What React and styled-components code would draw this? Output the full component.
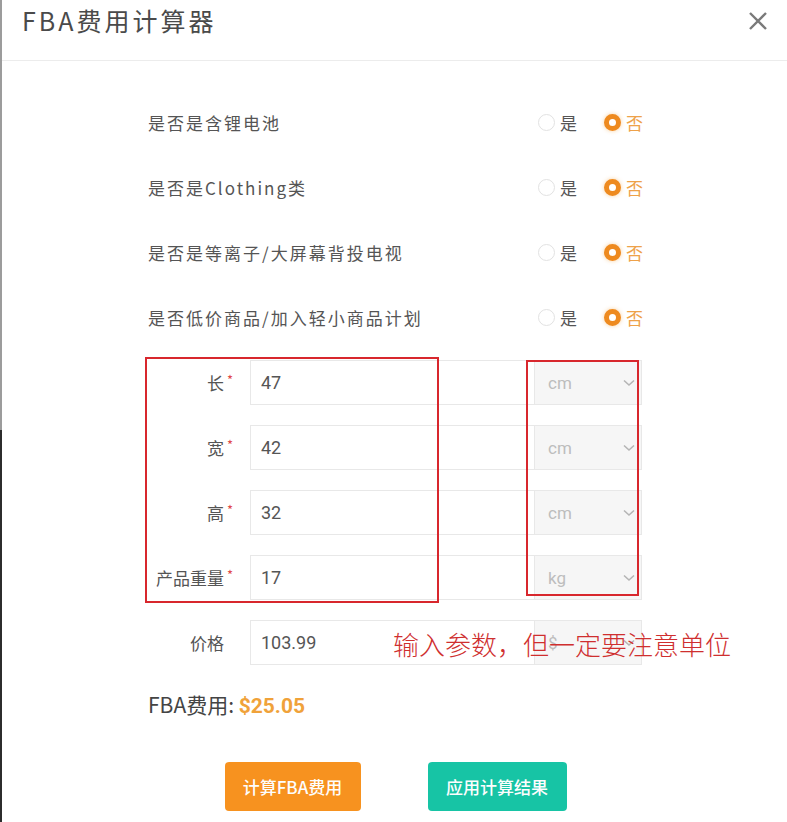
import React from "react";
import styled, { createGlobalStyle } from "styled-components";

const GlobalStyle = createGlobalStyle`
  body {
    margin: 0;
    background: #fff;
    font-family: "Noto Sans CJK SC", "Noto Sans", sans-serif;
  }
`;

const Frame = styled.div`
  width: 785px;
  height: 822px;
  overflow: hidden;
  background: #fff;
  border-left: 2px solid;
  border-image: linear-gradient(to bottom, #9c9c9c 0, #9c9c9c 430px, #2c2c2c 430px) 1;
`;

const Header = styled.div`
  height: 61px;
  display: flex;
  align-items: flex-start;
  justify-content: space-between;
  padding: 3px 18px 0 20px;
  box-sizing: border-box;
  border-bottom: 1px solid #ececec;
`;

const Title = styled.h3`
  margin: 0;
  font-size: 25px;
  line-height: 34px;
  font-weight: 400;
  letter-spacing: 3px;
  color: #4a4a4a;
`;

const Close = styled.button`
  border: 0;
  background: none;
  padding: 0;
  margin-top: 7px;
  width: 22px;
  height: 22px;
  cursor: pointer;
`;

const Body = styled.div`
  padding: 29px 0 0 146px;
  width: 495px;
`;

const Row = styled.div`
  height: 65px;
  display: flex;
  align-items: center;
`;

const Question = styled.span`
  flex: 1;
  font-size: 17px;
  letter-spacing: 2px;
  color: #555;
`;

const Options = styled.div`
  display: flex;
  align-items: center;
  gap: 27px;
`;

const Option = styled.label`
  display: flex;
  align-items: center;
  gap: 5px;
  font-size: 17px;
  color: ${p => (p.checked ? "#eea24a" : "#555")};
`;

const Dot = styled.span`
  width: 17px;
  height: 17px;
  border-radius: 50%;
  box-sizing: border-box;
  border: ${p => (p.checked ? "5.5px solid #ee8a1f" : "1px solid #e2e2e2")};
  background: #fff;
  box-shadow: ${p => (p.checked ? "0 0 4px rgba(240, 150, 40, 0.45)" : "none")};
`;

const Fields = styled.div`
  position: relative;
`;

const Label = styled.span`
  position: relative;
  width: 92px;
  padding-right: 16px;
  box-sizing: border-box;
  text-align: right;
  font-size: 17px;
  color: #555;
`;

const Star = styled.i`
  position: absolute;
  right: 7px;
  top: 0;
  font-style: normal;
  font-size: 13px;
  color: #e04848;
`;

const Input = styled.input`
  width: 285px;
  height: 45px;
  margin-left: 10px;
  box-sizing: border-box;
  border: 1px solid #e8e8e8;
  padding: 0 10px;
  font-family: Roboto, "Liberation Sans", sans-serif;
  font-size: 18px;
  color: #555;
  outline: none;
`;

const Unit = styled.div`
  width: 107px;
  height: 45px;
  box-sizing: border-box;
  border: 1px solid #e8e8e8;
  border-left: 0;
  background: #f6f6f6;
  display: flex;
  align-items: center;
  justify-content: space-between;
  padding: 0 6px 0 13px;
  font-family: Roboto, "Liberation Sans", sans-serif;
  font-size: 17px;
  color: #bdbdbd;
`;

const MarkBox = styled.div`
  position: absolute;
  left: ${p => p.left}px;
  top: ${p => p.top}px;
  width: ${p => p.width}px;
  height: ${p => p.height}px;
  border: 2px solid #d8272d;
  box-sizing: border-box;
  pointer-events: none;
`;

const Note = styled.div`
  position: absolute;
  left: 245px;
  top: 277px;
  font-size: 26px;
  line-height: 34px;
  font-weight: 300;
  color: #cf2f2f;
  white-space: nowrap;
`;

const Fee = styled.div`
  margin-top: 14px;
  font-size: 21px;
  line-height: 30px;
  color: #444;
  & > b {
    font-family: Roboto, "Liberation Sans", sans-serif;
    color: #f0a23a;
  }
`;

const Actions = styled.div`
  display: flex;
  justify-content: center;
  gap: 67px;
  margin-top: 41px;
`;

const Button = styled.button`
  width: ${p => p.width}px;
  height: 49px;
  border: 0;
  border-radius: 4px;
  background: ${p => p.bg};
  color: #fdfdfd;
  font-family: "Noto Sans CJK SC", sans-serif;
  font-size: 17px;
  font-weight: 500;
  cursor: pointer;
`;

const questions = [
  "是否是含锂电池",
  "是否是Clothing类",
  "是否是等离子/大屏幕背投电视",
  "是否低价商品/加入轻小商品计划",
];

const fields = [
  { label: "长", value: "47", unit: "cm", required: true },
  { label: "宽", value: "42", unit: "cm", required: true },
  { label: "高", value: "32", unit: "cm", required: true },
  { label: "产品重量", value: "17", unit: "kg", required: true },
  { label: "价格", value: "103.99", unit: "$" },
];

const Chevron = () => (
  <svg width="12" height="8" viewBox="0 0 12 8">
    <path d="M1 1.5l5 4.5 5-4.5" fill="none" stroke="#b5b5b5" strokeWidth="1.6" />
  </svg>
);

export default function App() {
  return (
    <Frame>
      <GlobalStyle />
      <Header>
        <Title>FBA费用计算器</Title>
        <Close aria-label="close">
          <svg width="22" height="22" viewBox="0 0 22 22">
            <path d="M3 3l16 16M19 3L3 19" stroke="#7a7a7a" strokeWidth="2.4" />
          </svg>
        </Close>
      </Header>
      <Body>
        {questions.map(q => (
          <Row key={q}>
            <Question>{q}</Question>
            <Options>
              <Option>
                <Dot />是
              </Option>
              <Option checked>
                <Dot checked />否
              </Option>
            </Options>
          </Row>
        ))}

        <Fields>
          {fields.map(f => (
            <Row key={f.label}>
              <Label>
                {f.label}
                {f.required && <Star>*</Star>}
              </Label>
              <Input defaultValue={f.value} />
              <Unit>
                {f.unit}
                <Chevron />
              </Unit>
            </Row>
          ))}
          <MarkBox left={-3} top={7} width={294} height={246} />
          <MarkBox left={378} top={10} width={113} height={236} />
          <Note>输入参数，但一定要注意单位</Note>
        </Fields>

        <Fee>
          FBA费用: <b>$25.05</b>
        </Fee>

        <Actions>
          <Button width={136} bg="#f7921f">计算FBA费用</Button>
          <Button width={139} bg="#17c4a5">应用计算结果</Button>
        </Actions>
      </Body>
    </Frame>
  );
}
